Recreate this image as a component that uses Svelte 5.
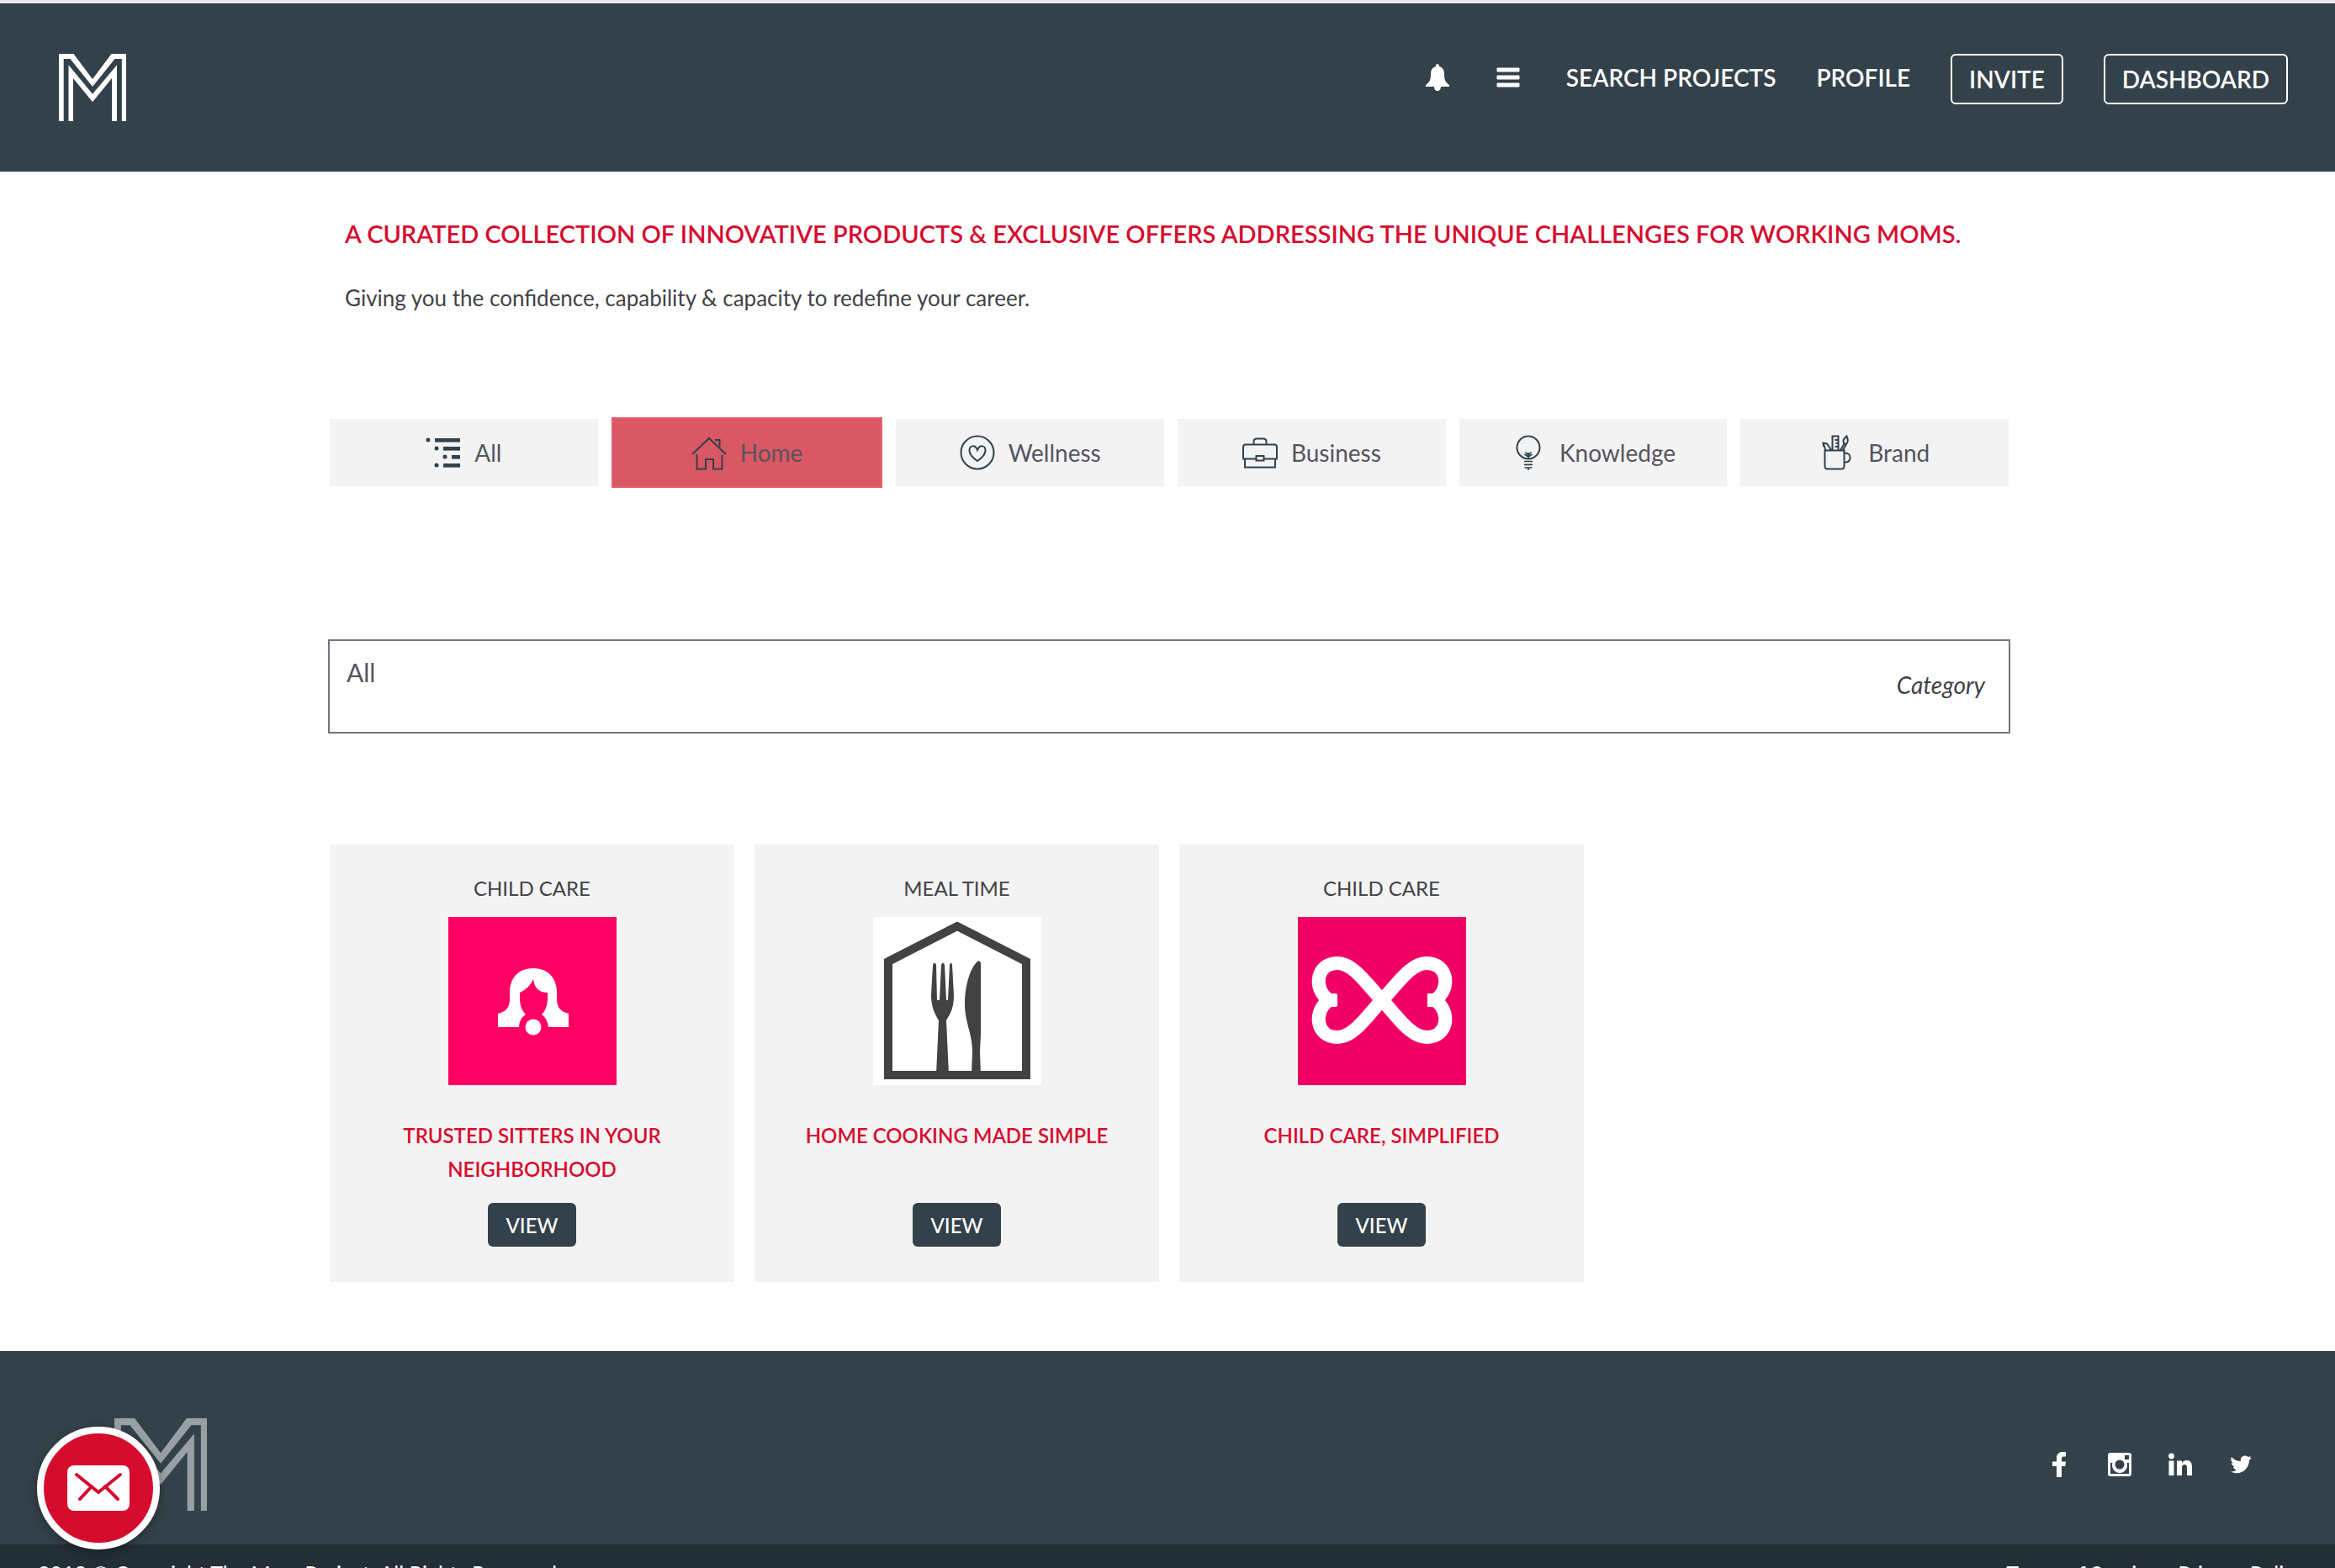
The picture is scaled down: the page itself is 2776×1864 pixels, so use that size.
<script>
  const tabs = ['All', 'Home', 'Wellness', 'Business', 'Knowledge', 'Brand'];
  let active = $state('Home');
  const cards = [
    { kind: 'CHILD CARE', art: 'sitter', title: 'TRUSTED SITTERS IN YOUR NEIGHBORHOOD' },
    { kind: 'MEAL TIME', art: 'meal', title: 'HOME COOKING MADE SIMPLE' },
    { kind: 'CHILD CARE', art: 'hearts', title: 'CHILD CARE, SIMPLIFIED' }
  ];
</script>

{#snippet mark()}
  <svg class="mark" viewBox="0 0 80 80" aria-hidden="true">
    <path d="M0 0H17.5L40 30L62.5 0H80V80H74.8V6H66.5L40 39L13.5 6H5.7V80H0Z" />
    <path d="M11.5 80V13.3L40 47.7L69 13.3V80H63V29L40 57.3L17 29V80Z" />
  </svg>
{/snippet}

{#snippet tabIcon(name)}
  <svg class="tab-icon" viewBox="0 0 42 42" aria-hidden="true">
    {#if name === 'All'}
      <g class="solid">
        <circle cx="3" cy="6" r="2.5" /><rect x="11" y="4" width="30" height="4.6" />
        <circle cx="13" cy="16" r="2.5" /><rect x="21" y="14" width="20" height="4.6" />
        <circle cx="23" cy="26" r="2.5" /><rect x="31" y="24" width="10" height="4.6" />
        <circle cx="13" cy="36" r="2.5" /><rect x="21" y="34" width="20" height="4.6" />
      </g>
    {:else if name === 'Home'}
      <path d="M1 23L21 4L41 23M6.500 23V40.500H17V29H26V40.500H36.500V24M28 6H33.500V14" />
    {:else if name === 'Wellness'}
      <circle cx="21" cy="21" r="19.500" />
      <path d="M21 31C15 27 11.500 23 11.500 18.500C11.500 12 18.500 11.500 21 18C23.500 11.500 30.500 12 30.500 18.500C30.500 23 27 27 21 31Z" />
    {:else if name === 'Business'}
      <path d="M13.500 11V8Q13.500 4.500 17 4.500H25Q28.500 4.500 28.500 8V11M4 11.500H38Q41 11.500 41 14.500V28.500H26M16 28.500H1V14.500Q1 11.500 4 11.500M3 28.500V38.500H39V28.500M16.500 25H25.500V30.500H16.500Z" />
    {:else if name === 'Knowledge'}
      <circle cx="21" cy="15" r="13.500" />
      <path d="M21 28.500V21M21 24L17.500 20.500M21 24L24.500 20.500M21 26L16.500 23M21 26L25.500 23M16 31.500H26M16 35.300H26M16.500 39H25.500M21 39V42" stroke-width="1.700" />
    {:else}
      <path d="M6.500 18.500H29.500V37Q29.500 40.500 26 40.500H10Q6.500 40.500 6.500 37ZM29.500 22Q36.500 21 36.500 27Q36.500 33 29.500 32.500M15.500 18V1.500H22.500V18M18.500 6H22M19.500 10H22M18.500 14H22M7.500 18L4.500 9.500L9 10.500L14 18M4.500 9.500L5 14M25 18L30 10M28 18L32 11M29 10C27.500 5 30 4 32.500 1.500C34.500 6 34 9 32 11Z" />
    {/if}
  </svg>
{/snippet}

{#snippet artwork(name)}
  {#if name === 'sitter'}
    <svg class="art" viewBox="0 0 200 200" role="img" aria-label="Sitter service logo">
      <rect width="200" height="200" fill="#ff0064" />
      <path fill="#fff" d="M59 115Q73 112 73 98V90C73 72 84 61 101 61C118 61 129 72 129 90V98Q129 112 143 115V131H119Q118 121 111 116C116 111 118 104 118 97V90Q103 90 101 74Q97 84 85 90V97C85 104 87 111 92 116Q84 121 84 131H59Z" />
      <circle cx="101" cy="131" r="9.500" fill="#fff" />
    </svg>
  {:else if name === 'meal'}
    <svg class="art" viewBox="0 0 200 200" role="img" aria-label="Home cooking logo">
      <rect width="200" height="200" fill="#fff" />
      <path d="M18 53L100 11L182 53V188H18Z" fill="none" stroke="#424242" stroke-width="10" />
      <path fill="#424242" d="M71 57Q73 52 75 57L76 99H79L81 57Q83 52 85 57L87 99H89L91 57Q93 52 94 57L96 93C96 108 92 115 87 123L90 187H75L78 123C73 115 69 106 69 93Z" />
      <path fill="#424242" d="M128 55V140L127 160L128 187H117L118 160C118 138 109 126 109 103C109 83 115 61 124 53Q127 51 128 55Z" />
    </svg>
  {:else}
    <svg class="art" viewBox="0 0 200 200" role="img" aria-label="Child care logo">
      <rect width="200" height="200" fill="#f00065" />
      <path fill="none" stroke="#fff" stroke-width="16" d="M46 99H37C17 85 22 55 47 55C67 55 84 83 100 99C116 115 133 143 153 143C178 143 183 113 163 99H154M46 99H37C17 113 22 143 47 143C67 143 84 115 100 99C116 83 133 55 153 55C178 55 183 85 163 99" />
      <path fill="#fff" d="M26 99L36 92H47V106H36ZM174 99L164 92H154V106H164Z" />
    </svg>
  {/if}
{/snippet}

<div class="page">
  <header>
    <a class="brand" href="#home" aria-label="The Mom Project">{@render mark()}</a>
    <nav>
      <button class="icon-button" aria-label="Notifications">
        <svg class="bell" viewBox="0 0 28 32" aria-hidden="true"><path d="M14 0Q16 0 16 3C20 4 22 7 22 12C22 20 24 22 28 25V27H18Q18 32 14 32Q10 32 10 27H0V25C4 22 6 20 6 12C6 7 8 4 12 3Q12 0 14 0Z" /></svg>
      </button>
      <button class="icon-button" aria-label="Menu">
        <svg class="bars" viewBox="0 0 28 24" aria-hidden="true"><path d="M1 1H27V5H1ZM1 10H27V14H1ZM1 19H27V23H1Z" stroke="#fff" stroke-width="1" stroke-linejoin="round" /></svg>
      </button>
      <a href="#search">SEARCH PROJECTS</a>
      <a href="#profile">PROFILE</a>
      <button class="outlined">INVITE</button>
      <button class="outlined">DASHBOARD</button>
    </nav>
  </header>

  <main>
    <section class="intro">
      <h1>A CURATED COLLECTION OF INNOVATIVE PRODUCTS &amp; EXCLUSIVE OFFERS ADDRESSING THE UNIQUE CHALLENGES FOR WORKING MOMS.</h1>
      <p>Giving you the confidence, capability &amp; capacity to redefine your career.</p>
    </section>

    <div class="tabs">
      {#each tabs as tab}
        <button class="tab" class:active={tab === active} aria-pressed={tab === active} onclick={() => (active = tab)}>
          {@render tabIcon(tab)}
          <span>{tab}</span>
        </button>
      {/each}
    </div>

    <div class="filter">
      <select id="category"><option>All</option><option>Child Care</option><option>Meal Time</option></select>
      <label for="category">Category</label>
    </div>

    <section class="cards">
      {#each cards as card}
        <article>
          <p>{card.kind}</p>
          {@render artwork(card.art)}
          <h2>{card.title}</h2>
          <button>VIEW</button>
        </article>
      {/each}
    </section>
  </main>

  <footer>
    <div class="footer-main">
      {@render mark()}
      <div class="social">
        <a href="#facebook" aria-label="Facebook"><svg viewBox="0 0 32 32"><path d="M13 31V18H8V12.500H13V9Q13 1 20 1H24V6.500H21.500Q19 6.500 19 9V12.500H24L23.300 18H19V31Z" /></svg></a>
        <a href="#instagram" aria-label="Instagram"><svg viewBox="0 0 32 32"><path fill-rule="evenodd" d="M5 2H27Q30 2 30 5V27Q30 30 27 30H5Q2 30 2 27V5Q2 2 5 2ZM22 5V10H27V5ZM5 14V27H27V14H24.500A9 9 0 1 1 7.500 14ZM16 10.500A5.500 5.500 0 1 0 16 21.500A5.500 5.500 0 1 0 16 10.500Z" /></svg></a>
        <a href="#linkedin" aria-label="LinkedIn"><svg viewBox="0 0 32 32"><circle cx="5.500" cy="6" r="3.400" /><path d="M2.500 11.500H8.500V29H2.500ZM12 11.500H18V14Q20 11 24 11Q30 11 30 18.500V29H24V19.500Q24 16 21 16Q18 16 18 19.500V29H12Z" /></svg></a>
        <a href="#twitter" aria-label="Twitter"><svg viewBox="0 0 32 32"><path d="M5 7Q9 12 16 12C15 5 22 4 25 7L28 6L26.500 8.500L29 8L26 11C26 22 15 30 4 24.500Q8 25 11 22Q8 22 7 19H9Q5 17 5 14L7 14.500Q3 11 5 7Z" /></svg></a>
      </div>
    </div>
    <div class="legal">
      <span>2018 © Copyright The Mom Project. All Rights Reserved</span>
      <div><a href="#terms">Terms of Service</a><a href="#privacy">Privacy Policy</a></div>
    </div>
  </footer>

  <button class="contact" aria-label="Contact us">
    <svg viewBox="0 0 74 54" aria-hidden="true"><rect width="74" height="54" rx="8" fill="#fff" /><path d="M11 11L37 32L63 11M29 25L15 40M45 25L60 40" fill="none" stroke="#d60c2f" stroke-width="4" stroke-linecap="round" /></svg>
  </button>
</div>

<style>
  :global(body) { background: #fff; }
  .page {
    position: relative;
    height: 100vh;
    overflow: hidden;
    box-sizing: border-box;
    border-top: 4px solid #e8e8e8;
    font-family: Lato, "Liberation Sans", sans-serif;
    color: #424247;
  }
  button, select { font: inherit; color: inherit; margin: 0; cursor: pointer; }
  a { color: inherit; text-decoration: none; }
  svg { display: block; }
  h1, h2, p { margin: 0; }

  header {
    display: flex;
    justify-content: space-between;
    align-items: flex-start;
    padding: 60px 56px 60px 70px;
    background: #33414a;
    color: #fff;
  }
  .mark { width: 80px; fill: #fff; }
  nav { display: flex; gap: 48px; font-size: 28px; font-weight: 600; line-height: 56px; }
  .icon-button { display: flex; align-items: center; height: 56px; padding: 0 6px 0 0; border: 0; background: none; }
  .icon-button svg { fill: #fff; }
  .bell { width: 30px; height: 32px; }
  .bars { width: 30px; height: 24px; }
  .outlined { padding: 0 20px; border: 2px solid #fff; border-radius: 6px; background: none; }

  main { padding: 54px 386px 82px 390px; }
  .intro { padding-left: 20px; }
  h1 { font-size: 29px; line-height: 40px; font-weight: 600; color: #d60c2f; white-space: nowrap; }
  .intro p { margin-top: 36px; font-size: 26px; line-height: 40px; }

  .tabs { display: flex; align-items: center; gap: 16px; margin-top: 122px; padding: 0 2px; }
  .tab {
    flex: 1;
    display: flex;
    align-items: center;
    justify-content: center;
    gap: 16px;
    height: 80px;
    box-sizing: content-box;
    padding: 0;
    border: 0;
    background: #f3f3f3;
    color: #56545f;
    font-size: 28px;
  }
  .tab.active { border: 2px solid #e5606e; background: #da5864; }
  .tab-icon { width: 42px; height: 42px; fill: none; stroke: #33414a; stroke-width: 2; }
  .solid { fill: #33414a; stroke: none; }

  .filter {
    display: flex;
    align-items: center;
    height: 108px;
    margin-top: 180px;
    padding-right: 28px;
    border: 2px solid #75747d;
  }
  .filter select {
    flex: 1;
    height: 100%;
    padding: 0 20px 34px;
    border: 0;
    appearance: none;
    background: none;
    color: #56545f;
    font-size: 30px;
  }
  .filter label { padding-bottom: 4px; font-size: 28px; font-style: italic; }

  .cards { display: grid; grid-template-columns: repeat(4, 1fr); gap: 24px; margin-top: 132px; padding: 0 2px; }
  article {
    display: flex;
    flex-direction: column;
    align-items: center;
    padding: 32px 40px 42px;
    background: #f3f3f3;
    text-align: center;
  }
  article p { font-size: 24px; line-height: 40px; }
  .art { width: 200px; margin: 14px 0 40px; }
  h2 { min-height: 80px; font-size: 24px; line-height: 40px; font-weight: 600; color: #d60c2f; }
  article button {
    height: 52px;
    margin-top: 20px;
    padding: 0 22px;
    border: 0;
    border-radius: 6px;
    background: #33414a;
    color: #fff;
    font-size: 24px;
    font-weight: 500;
  }

  footer { color: #fff; }
  .footer-main {
    display: flex;
    justify-content: space-between;
    align-items: center;
    padding: 80px 96px 40px 136px;
    background: #33414a;
  }
  .footer-main > :global(.mark) { width: 110px; opacity: 0.5; }
  .social { display: flex; gap: 40px; }
  .social svg { width: 32px; height: 32px; fill: #fff; }
  .legal {
    display: flex;
    justify-content: space-between;
    padding: 18px 36px 40px 45px;
    background: #222f37;
    font-size: 25px;
    line-height: 32px;
  }
  .legal div { display: flex; gap: 24px; }

  .contact {
    position: absolute;
    left: 44px;
    bottom: 22px;
    display: grid;
    place-items: center;
    width: 146px;
    height: 146px;
    padding: 0;
    border: 8px solid #fff;
    border-radius: 50%;
    background: #d60c2f;
    box-shadow: 0 4px 12px rgb(0 0 0 / 30%);
  }
  .contact svg { width: 74px; height: 54px; }
</style>
